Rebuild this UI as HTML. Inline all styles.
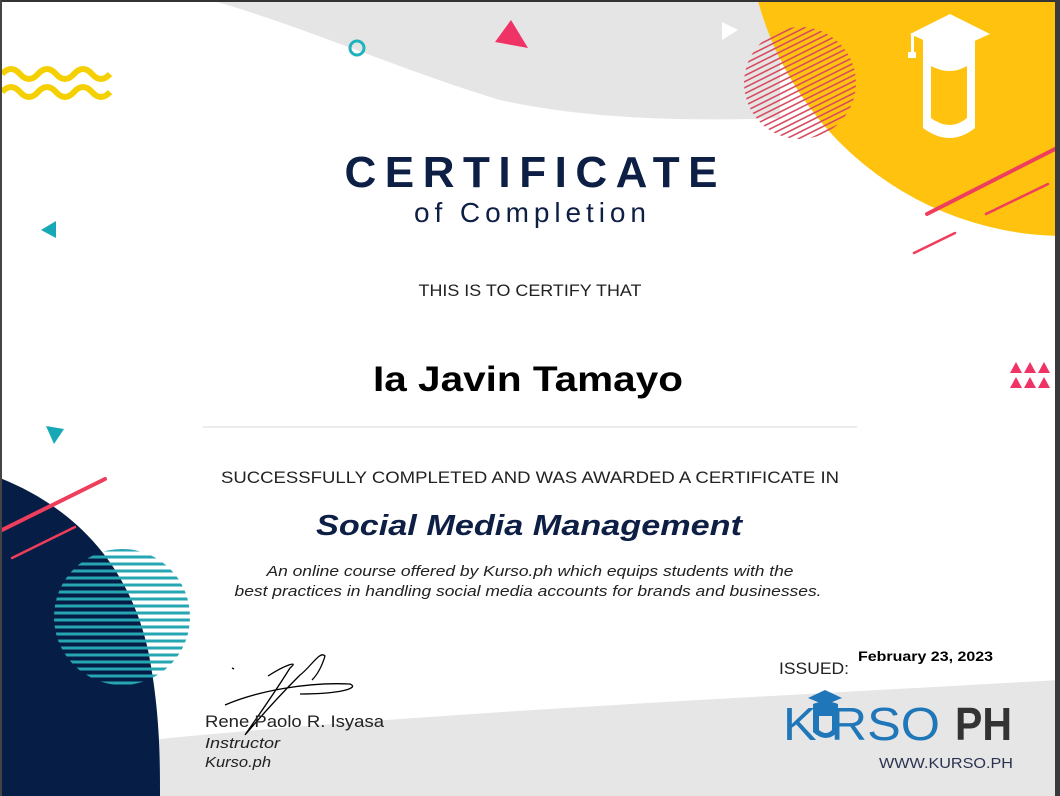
<!DOCTYPE html>
<html><head><meta charset="utf-8"><style>
html,body{margin:0;padding:0;background:#fff;}
svg{display:block}
</style></head><body>
<svg width="1060" height="796" viewBox="0 0 1060 796" xmlns="http://www.w3.org/2000/svg" font-family="Liberation Sans, sans-serif">
<defs>
<clipPath id="pc"><circle cx="800" cy="83" r="56"/></clipPath>
<clipPath id="tc"><circle cx="122" cy="617" r="68"/></clipPath>
</defs>
<rect width="1060" height="796" fill="#fff"/>
<path d="M210,0 C300,25 400,70 500,100 C580,118 680,122 780,118 L780,0 Z" fill="#e5e5e5"/>
<path d="M150,740 C400,715 700,700 1060,680 L1060,796 L150,796 Z" fill="#e6e6e6"/>
<circle cx="1065" cy="-82" r="318" fill="#ffc20e"/>
<g clip-path="url(#pc)" stroke="#d94a5e" stroke-width="1.6">
<path d="M720,40 l160,-80 M720,46 l160,-80 M720,52 l160,-80 M720,58 l160,-80 M720,64 l160,-80 M720,70 l160,-80 M720,76 l160,-80 M720,82 l160,-80 M720,88 l160,-80 M720,94 l160,-80 M720,100 l160,-80 M720,106 l160,-80 M720,112 l160,-80 M720,118 l160,-80 M720,124 l160,-80 M720,130 l160,-80 M720,136 l160,-80 M720,142 l160,-80 M720,148 l160,-80 M720,154 l160,-80 M720,160 l160,-80 M720,166 l160,-80 M720,172 l160,-80 M720,178 l160,-80 M720,184 l160,-80 M720,190 l160,-80 M720,196 l160,-80 M720,202 l160,-80 M720,208 l160,-80 M720,214 l160,-80 M720,220 l160,-80 M720,226 l160,-80"/>
</g>
<g fill="#fff">
<polygon points="950,14 990,34 950,52 910,34"/>
<rect x="911" y="34" width="3" height="20"/>
<rect x="908" y="52" width="8" height="6"/>
<path d="M923,40 Q950,30 975,40 L975,128 Q950,148 923,128 Z M931,66 L931,118 Q950,132 967,118 L967,66 Q950,76 931,66 Z" fill-rule="evenodd"/>
</g>
<g stroke="#ef3e5c" stroke-linecap="round">
<line x1="927" y1="214" x2="1057" y2="148" stroke-width="4"/>
<line x1="986" y1="214" x2="1048" y2="184" stroke-width="2.5"/>
<line x1="914" y1="253" x2="955" y2="233" stroke-width="2.5"/>
</g>
<g fill="none" stroke="#f5d000" stroke-width="6">
<path d="M2,74 q9,-10 18,0 t18,0 t18,0 t18,0 t18,0 t18,0"/>
<path d="M2,92 q9,-10 18,0 t18,0 t18,0 t18,0 t18,0 t18,0"/>
</g>
<circle cx="357" cy="48" r="7" fill="none" stroke="#1fb3bd" stroke-width="3"/>
<polygon points="511,20 528,48 495,42" fill="#ef3366"/>
<polygon points="722,22 738,30 722,40" fill="#fff"/>
<polygon points="56,221 56,238 41,230" fill="#17a8b6"/>
<polygon points="46,426 64,429 54,444" fill="#17a8b6"/>
<g fill="#ef3366">
<polygon points="1010,373 1016,362 1022,373"/><polygon points="1024,373 1030,362 1036,373"/><polygon points="1038,373 1044,362 1050,373"/>
<polygon points="1010,388 1016,377 1022,388"/><polygon points="1024,388 1030,377 1036,388"/><polygon points="1038,388 1044,377 1050,388"/>
</g>
<path d="M0,478 C80,510 130,570 148,650 C160,710 160,760 160,796 L0,796 Z" fill="#061d45"/>
<g clip-path="url(#tc)" stroke="#26a5b3" stroke-width="3">
<path d="M40,550h170M40,557h170M40,564h170M40,571h170M40,578h170M40,585h170M40,592h170M40,599h170M40,606h170M40,613h170M40,620h170M40,627h170M40,634h170M40,641h170M40,648h170M40,655h170M40,662h170M40,669h170M40,676h170M40,683h170"/>
</g>
<g stroke="#ef3e5c" stroke-linecap="round">
<line x1="2" y1="530" x2="105" y2="479" stroke-width="4"/>
<line x1="12" y1="558" x2="75" y2="527" stroke-width="2.5"/>
</g>
<g fill="#0e1f45" text-anchor="middle">
<text x="531" y="187" font-size="44" font-weight="bold" textLength="373" lengthAdjust="spacing">CERTIFICATE</text>
<text x="530" y="222" font-size="28" textLength="232" lengthAdjust="spacing">of Completion</text>
<text x="530" y="296" font-size="17" fill="#222" textLength="223" lengthAdjust="spacingAndGlyphs">THIS IS TO CERTIFY THAT</text>
<text x="528" y="391" font-size="35" font-weight="bold" fill="#000" textLength="310" lengthAdjust="spacingAndGlyphs">Ia Javin Tamayo</text>
<text x="530" y="483" font-size="17" fill="#222" textLength="618" lengthAdjust="spacingAndGlyphs">SUCCESSFULLY COMPLETED AND WAS AWARDED A CERTIFICATE IN</text>
<text x="529" y="535" font-size="29" font-weight="bold" font-style="italic" textLength="426" lengthAdjust="spacingAndGlyphs">Social Media Management</text>
<text x="530" y="576" font-size="15" font-style="italic" fill="#222" textLength="527" lengthAdjust="spacingAndGlyphs">An online course offered by Kurso.ph which equips students with the</text>
<text x="528" y="596" font-size="15" font-style="italic" fill="#222" textLength="587" lengthAdjust="spacingAndGlyphs">best practices in handling social media accounts for brands and businesses.</text>
</g>
<line x1="203" y1="427" x2="857" y2="427" stroke="#d8d8d8" stroke-width="1"/>
<g fill="none" stroke="#000" stroke-width="1.3">
<path d="M232,668 l2,1"/>
<path d="M225,705 C260,690 310,682 350,684 C360,688 340,694 300,694 M268,676 C285,665 300,660 290,668 C270,700 255,720 245,735 C262,715 285,690 300,675 C310,668 320,650 325,656 C322,666 318,674 312,680"/>
</g>
<g fill="#222">
<text x="205" y="727" font-size="17" textLength="179" lengthAdjust="spacingAndGlyphs">Rene Paolo R. Isyasa</text>
<text x="205" y="748" font-size="15" font-style="italic" textLength="75" lengthAdjust="spacingAndGlyphs">Instructor</text>
<text x="205" y="767" font-size="15" font-style="italic" textLength="66" lengthAdjust="spacingAndGlyphs">Kurso.ph</text>
<text x="779" y="674" font-size="17" textLength="70" lengthAdjust="spacingAndGlyphs">ISSUED:</text>
<text x="858" y="661" font-size="14" font-weight="bold" fill="#000" textLength="135" lengthAdjust="spacingAndGlyphs">February 23, 2023</text>
<text x="879" y="768" font-size="15" fill="#2a3450" textLength="134" lengthAdjust="spacingAndGlyphs">WWW.KURSO.PH</text>
</g>
<text x="783" y="740" font-size="46" fill="#1f76b8" textLength="157" lengthAdjust="spacingAndGlyphs">K  RSO</text>
<g fill="#1f76b8">
<polygon points="825,690 842,698 825,705 808,698"/>
<path d="M813,704 Q826,699 838,704 L838,732 Q826,744 813,732 Z M819,716 L819,730 Q826,736 832,730 L832,716 Z" fill-rule="evenodd"/>
</g>
<text x="955" y="740" font-size="46" font-weight="bold" fill="#333" textLength="57" lengthAdjust="spacingAndGlyphs">PH</text>
<rect x="0" y="0" width="1060" height="2" fill="#333"/>
<rect x="0" y="0" width="2" height="796" fill="#444"/>
<rect x="1055" y="0" width="5" height="796" fill="#3a3a3a"/>
</svg>
</body></html>
